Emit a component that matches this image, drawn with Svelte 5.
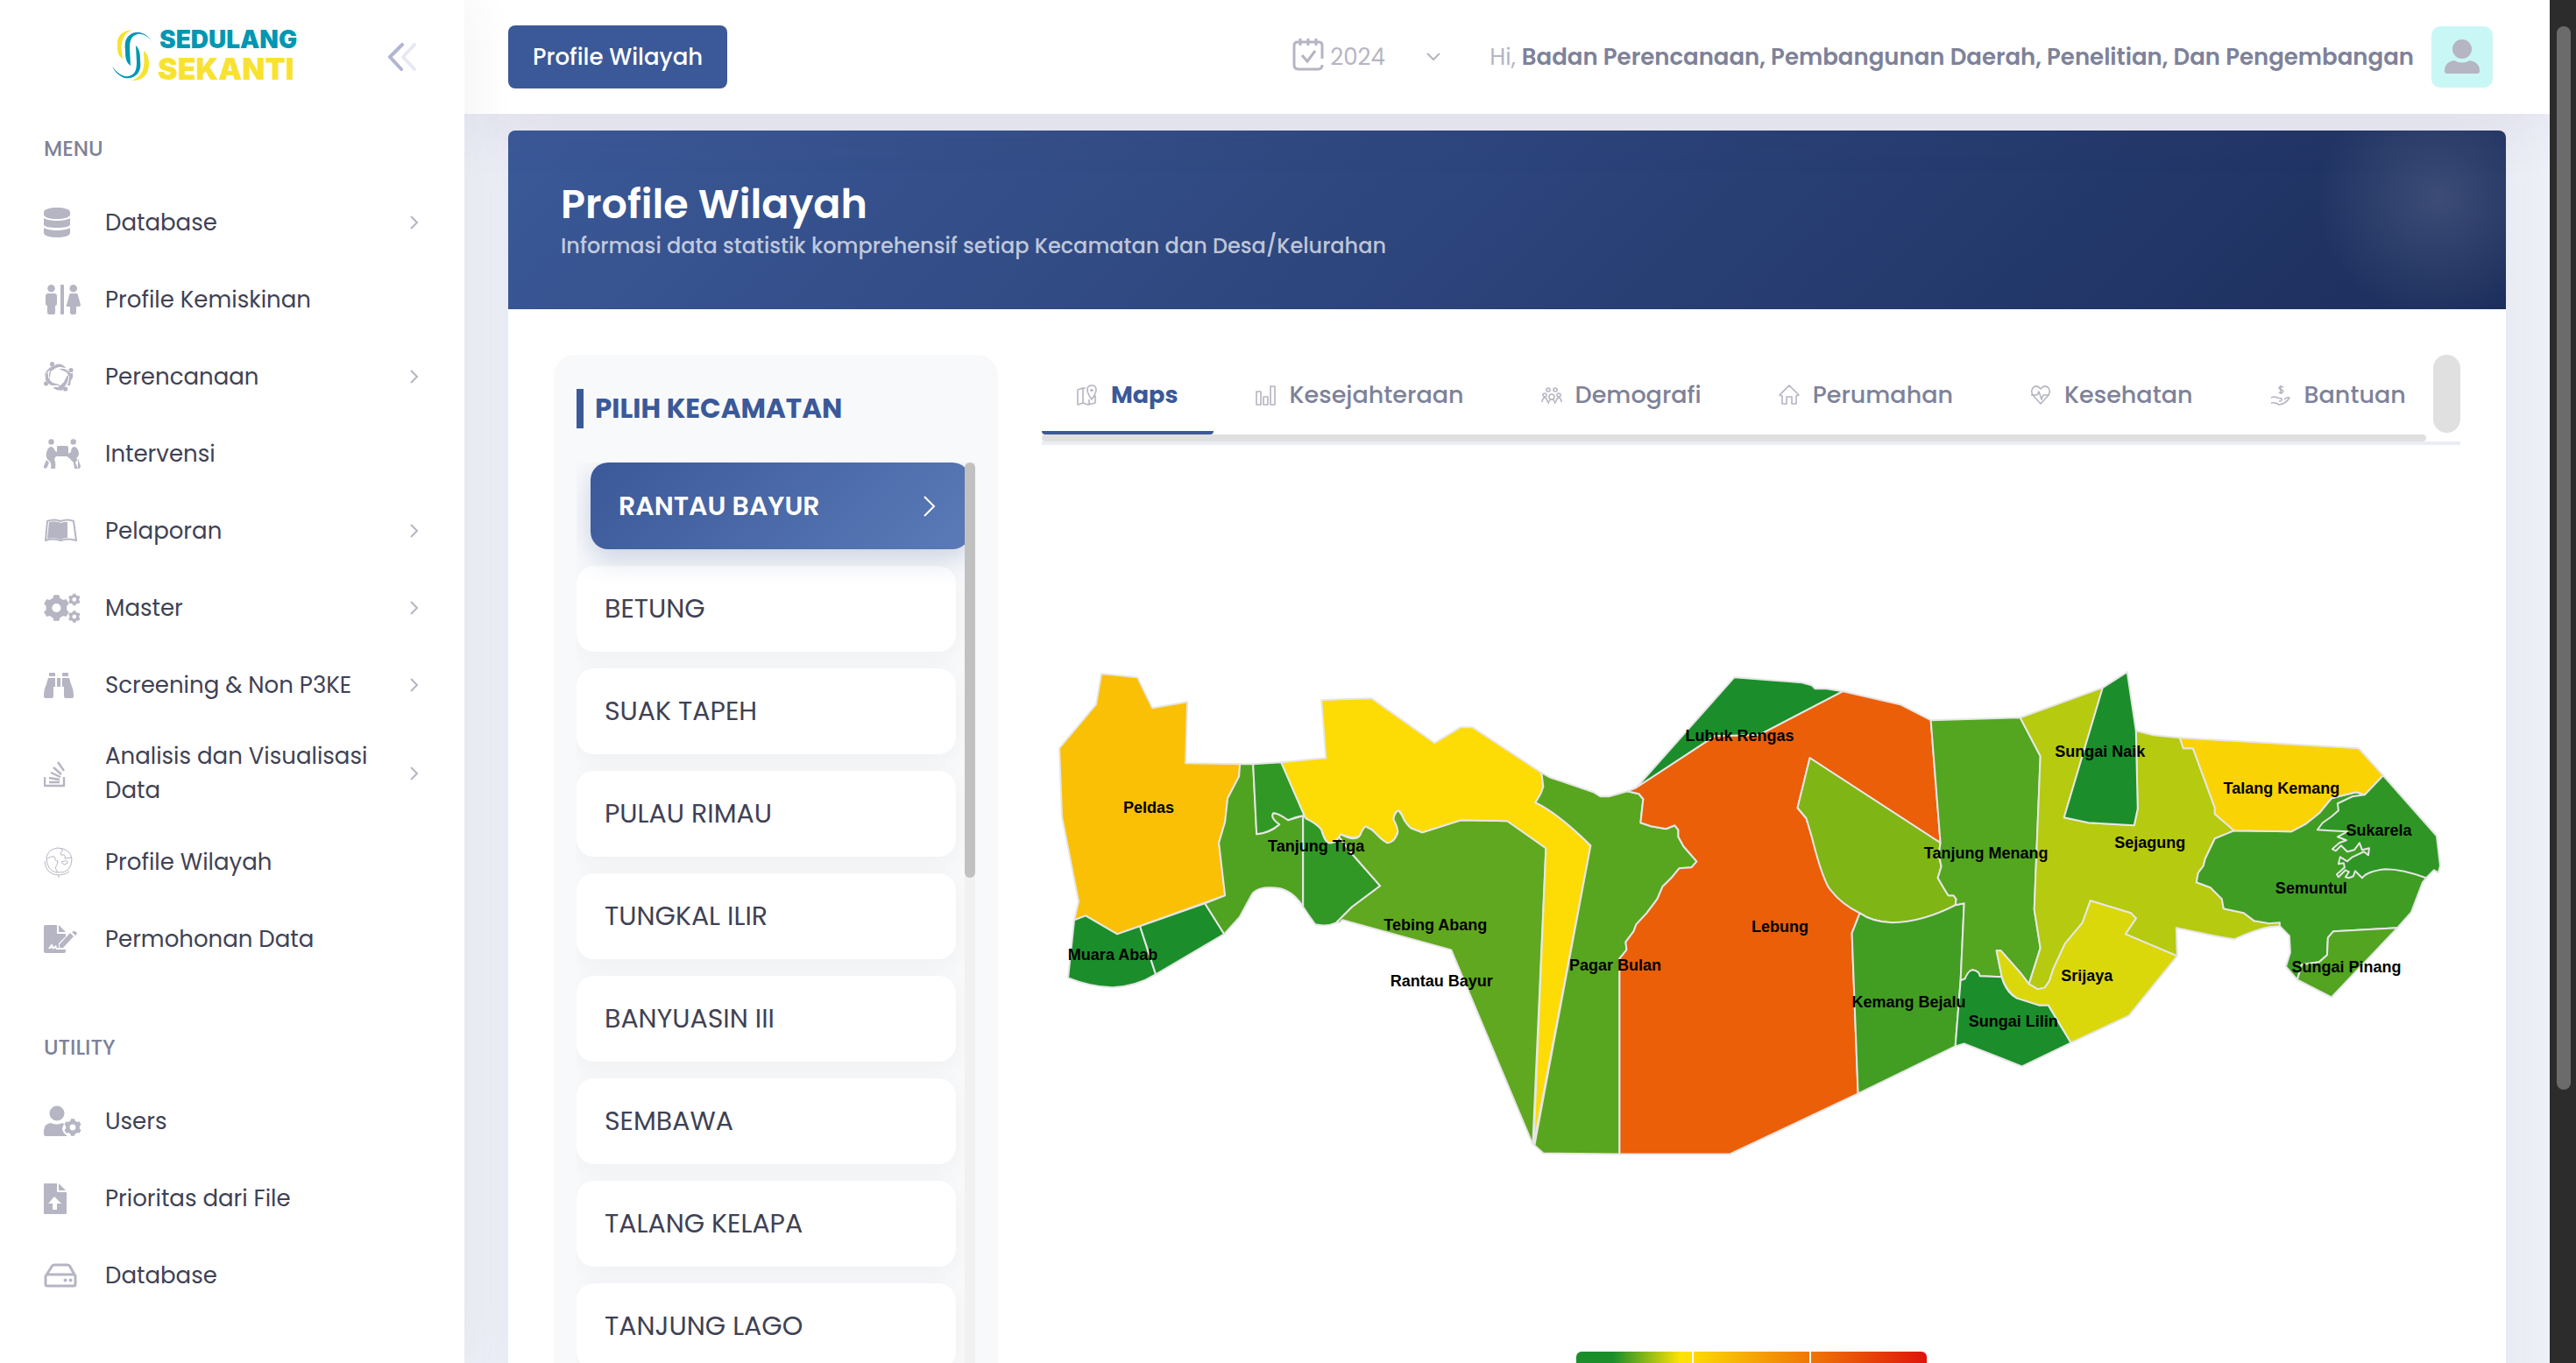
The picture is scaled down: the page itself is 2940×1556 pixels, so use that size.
<script lang="ts">
  type Icon = { fill?: string; line?: string; weight?: number };
  type MenuItem = { label: string; icon: string; children?: boolean };

  const dot = (x: number, y: number, r: number) =>
    `M${x - r} ${y}a${r} ${r} 0 1 0 ${r * 2} 0a${r} ${r} 0 1 0 ${-r * 2} 0z`;

  const gear = (x: number, y: number, r: number, teeth = 6) => {
    const step = (Math.PI * 2) / teeth;
    const points: string[] = [];
    for (let i = 0; i < teeth; i++) {
      const a = i * step - Math.PI / 2;
      [
        [-0.32, 0.8],
        [-0.2, 1],
        [0.2, 1],
        [0.32, 0.8],
      ].forEach(([offset, scale]) => {
        const angle = a + offset * step;
        points.push(
          `${(x + Math.cos(angle) * r * scale).toFixed(2)} ${(y + Math.sin(angle) * r * scale).toFixed(2)}`
        );
      });
    }
    return `M${points.join('L')}Z${dot(x, y, r * 0.34)}`;
  };

  const icons: Record<string, Icon> = {
    database: {
      fill: 'M30 6v3c0 3-7 5-15 5S0 12 0 9V6c0-3 7-5 15-5s15 2 15 5zM30 13v7c0 3-7 4-15 4S0 23 0 20v-7c3 2 9 3 15 3s12-1 15-3zM30 24v6c0 3-7 5-15 5S0 33 0 30v-6c3 2 9 3 15 3s12-1 15-3z',
    },
    restroom: {
      fill: `${dot(8.5, 5.3, 4.3)}${dot(33.7, 5.3, 4.3)}M5 11h7q3 0 3 3v9q0 2-2 2v8q0 2-2 2H6q-2 0-2-2v-8q-2 0-2-2v-9q0-3 3-3zM20 1h2q1 0 1 1v32q0 1-1 1h-2q-1 0-1-1V2q0-1 1-1zM31 11h6q2 0 2 2l3 11q0 2-2 2h-3v7q0 2-2 2h-3q-2 0-2-2v-7h-3q-2 0-1-2l3-11q0-2 2-2z`,
    },
    circle: {
      fill: `${dot(9.6, 3.7, 2.6)}${dot(31, 10.5, 2.6)}${dot(24.7, 32, 2.6)}${dot(2.6, 25.8, 2.6)}M10 6q3 0 4-2 7-2 11 4h-2q-4-2-9 0L8 12l-1 7-2 1 0-6q-3 1-4 5 0-9 9-13zM29 13q2 2 4 1 1 5-2 8l-1 6-3 0q2-6 2-10l-3-5-9-4 6 0q4 1 6 4zM24 29q-2 1-2 4-6 2-11-2v-1h7l-2-2-6-1 9 1 4-4 4-8 1 2q0 6-4 11zM4 24q0-1-2-2-1-6 4-11l1 0q-2 5 0 11l3 3 8 2-1 1-7 0q-3 0-6-4z`,
    },
    carry: {
      fill: `${dot(8.5, 4.4, 3.2)}${dot(33.7, 4.4, 3.2)}M16 9h10q2 0 2 2v7l3-2q0-6 4-6 4 1 5 7 0 4-3 6l2 3 0 9h-4l-1-7-5-5q-1 0-1-1l-2-1H14l-1 1-1 3q2 2 1 10H8q1-6-1-8l-3-3q-2-3-1-7 1-6 5-7 3 0 5 5l2 1v-5q0-2 1-2zM3 25l3 3-2 5q-1 3-4 1 0-1 0-2zM39 24l3 8q0 3-3 3l-3-7z`,
    },
    book: {
      fill: 'M6 8q7-2 14 1 4-2 7-1v18q-5 0-8 2-6-3-15-1z',
      line: 'M4 7q8-3 15 0 8-3 15 0l3 22q-9-3-18 0-10-3-17 0z',
      weight: 2,
    },
    cogs: {
      fill: `${gear(14.4, 18, 15)}${gear(34.8, 8.5, 7)}${gear(34.8, 28, 7)}`,
    },
    binoculars: {
      fill: 'M7 4h5q1 0 1 1v3H6V5q0-1 1-1zM22 4h5q1 0 1 1v3h-7V5q0-1 1-1zM5 10h8v10h-2v11q0 2-2 2H2q-2 0-2-2 0-8 3-14zM15 10h4v10h-4zM21 10h8l2 7q3 6 3 14 0 2-2 2h-7q-2 0-2-2V20h-2z',
    },
    stack: {
      line: 'M1 22v10h22V22M6 28h12M6 23l12 2M8 17l11 5M11 11l9 8M16 5l7 10',
      weight: 2.4,
    },
    globe: {
      line: 'M3 12q3-9 13-10 15 1 16 13-1 16-15 15Q7 30 4 20L3 12M1 17q1 16 17 16 8-1 11-4M17 33v3M20 2q3 3-1 6 0 3 3 2t2 4l8-1M4 14q8-4 9-1-1 4 3 4-1 5-3 8 4 5 1 5M20 18q8-3 7 1-4 4-7-1z',
      weight: 1,
    },
    signature: {
      fill: 'M2 2h13v9q0 1 1 1h9v3l-8 8v5h-2l-1-3-3 2-2-4-4 6h3l1-2 1 3 3-2 1 2h11v2q0 2-2 2H2q-2 0-2-2V4q0-2 2-2zM17 2l8 8h-8zM18 24l12-13 4 4-12 13h-4zM32 10q3-2 5 0 2 2-1 4z',
    },
    userCog: {
      fill: `${dot(15, 9, 8.5)}M8 20q7 3 13 0l2 1-2 5q0 5 6 9H2q-2 0-2-2v-4q0-8 8-9z${gear(33, 25, 10)}`,
    },
    upload: {
      fill: 'M1 1h14v9q0 1 1 1h10v24q0 1-1 1H1q-1 0-1-1V2q0-1 1-1zM17 1l8 8h-8zM12 16l-7 8h5v7h5v-7h5z',
    },
    drive: {
      fill: `${dot(24.5, 23.5, 2)}${dot(30.5, 23.5, 2)}`,
      line: 'M3 17h31q2 0 2 2v9q0 2-2 2H4q-2 0-2-2v-9l7-11q1-2 3-2h15q2 0 3 2l6 11',
      weight: 3,
    },
    map: {
      line: 'M10 4H7L1 6v17l6-2 6 2 8-2v-8l-2 1M7 4v17M14 23v-6M17 1q5 0 5 5 0 4-5 11-5-7-5-11 0-5 5-5zM16 6h2v1h-2z',
      weight: 1.6,
    },
    bars: { line: 'M1 8h5v15H1zM9 14h5v9H9zM17 2h5v21h-5z', weight: 1.6 },
    people: {
      line: `${dot(8, 6, 2)}${dot(16, 6, 2)}${dot(4, 12, 2)}${dot(20, 12, 2)}${dot(12, 14, 3)}M1 20q0-4 3-5 3 1 3 5M17 20q0-4 3-5 3 1 3 5M8 22q1-5 4-5t4 5`,
      weight: 1.6,
    },
    home: { line: 'M1 12L12 1l11 11-3 1v9h-5v-8H9v8H4v-9z', weight: 1.6 },
    heart: {
      line: 'M12 5Q8 0 4 3t-1 9l9 10 9-10q3-6-1-9t-8 2zM1 12h7l2-4 3 9 2-5h7',
      weight: 1.6,
    },
    hand: {
      line: 'M15 3q-4-2-5 1 1 2 3 2 3 1 1 3-2 1-4 0M12 1v10M1 15q4-2 7 0l5 1q1 3-3 3M1 21q5-1 9 2 8-1 12-8-3-1-6 2',
      weight: 1.6,
    },
  };

  const menu: MenuItem[] = [
    { label: 'Database', icon: 'database', children: true },
    { label: 'Profile Kemiskinan', icon: 'restroom' },
    { label: 'Perencanaan', icon: 'circle', children: true },
    { label: 'Intervensi', icon: 'carry' },
    { label: 'Pelaporan', icon: 'book', children: true },
    { label: 'Master', icon: 'cogs', children: true },
    { label: 'Screening & Non P3KE', icon: 'binoculars', children: true },
    { label: 'Analisis dan Visualisasi Data', icon: 'stack', children: true },
    { label: 'Profile Wilayah', icon: 'globe' },
    { label: 'Permohonan Data', icon: 'signature' },
  ];

  const utility: MenuItem[] = [
    { label: 'Users', icon: 'userCog' },
    { label: 'Prioritas dari File', icon: 'upload' },
    { label: 'Database', icon: 'drive' },
  ];

  const sections = [
    { title: 'MENU', items: menu },
    { title: 'UTILITY', items: utility },
  ];

  const districts = [
    'RANTAU BAYUR',
    'BETUNG',
    'SUAK TAPEH',
    'PULAU RIMAU',
    'TUNGKAL ILIR',
    'BANYUASIN III',
    'SEMBAWA',
    'TALANG KELAPA',
    'TANJUNG LAGO',
  ];

  const tabs = [
    { label: 'Maps', icon: 'map' },
    { label: 'Kesejahteraan', icon: 'bars' },
    { label: 'Demografi', icon: 'people' },
    { label: 'Perumahan', icon: 'home' },
    { label: 'Kesehatan', icon: 'heart' },
    { label: 'Bantuan', icon: 'hand' },
  ];

  let district = $state('RANTAU BAYUR');
  let tab = $state('Maps');
  let year = $state('2024');

  // village polygons, painted in order
  const areas = [
    { color: '#fac005', d: 'M68 29L109 33 126 68 166 61 164 131 226 132 225 146 212 171 209 198 202 222 209 282 86 326 50 305 37 310 42 289 23 192 20 114 62 64z' },
    { color: '#1b8e2b', d: 'M37 310L50 305 86 326 112 317 130 372Q107 386 80 387 55 386 30 376z' },
    { color: '#1b8e2b', d: 'M112 317L186 291 208 326 130 372z' },
    { color: '#50a320', d: 'M226 132L241 132 245 212Q260 211 271 201 260 194 263 189 268 186 281 196L298 191V295Q288 278 272 274 245 270 239 282L226 306 208 326 186 291 209 282 202 222 209 198 212 171 225 146z' },
    { color: '#319826', d: 'M241 132L273 130 301 194 298 191Q287 193 281 196 268 187 264 188 260 193 271 201 258 211 245 212z' },
    { color: '#319826', d: 'M298 191L310 198Q316 202 319 207 323 222 328 222 336 222 339 215L356 237 386 271 354 295 336 313Q325 318 312 315 308 310 298 295z' },
    { color: '#60a81f', d: 'M339 215L341 212Q350 217 355 217 361 217 363 213 367 203 369 203 375 204 387 217 394 223 401 219 406 213 406 209 401 202 401 195 403 186 407 185 411 190 413 195 417 202 421 205L434 210 478 196 531 197 575 228 560 566 467 344 343 310 340 313 336 313 354 295 386 271 356 237z' },
    { color: '#fddb04', d: 'M273 130L324 125 319 59 376 57 448 108 478 90 491 90 570 142 572 158 569 166 563 176Q585 185 626 225L561 566 575 228 531 197 478 196 434 210 421 205Q415 199 413 195 410 186 407 185 402 186 401 195 406 204 406 209 402 222 394 222 388 219 377 207L369 203Q366 206 363 213 358 219 341 212L339 215Q334 222 328 222 324 222 319 207 314 200 301 194z' },
    { color: '#58a620', d: 'M570 142L579 147 629 164 637 169 647 169 668 163 681 166 686 172 684 188 683 199 695 203 712 206 722 202 726 207 726 215 732 226 747 243 741 250 727 251 718 262 708 272 702 286 690 302 678 315 675 323 666 335 667 344 659 354V577L572 576 562 567 626 225Q590 189 563 176L569 166 572 158z' },
    { color: '#1b8e2b', d: 'M790 33L867 39 878 42 882 46 895 46 914 49 818 99 768 100 678 159z' },
    { color: '#eb5f08', d: 'M668 163L678 159 768 100 818 99 914 49 979 64 1014 82 1025 222 876 125 862 182 872 194 878 214 887 245 897 272 912 287 933 302 924 325 931 508 785 577H659V354L667 344 666 335 675 323 678 315 690 302 702 286 708 272 718 262 727 251 741 250 747 243 732 226 726 215 726 207 722 202 712 206 695 203 683 199 686 172 681 166z' },
    { color: '#80b516', d: 'M876 125L1025 222 1023 235 1026 249 1022 262 1029 274 1034 282 1040 282 1043 286 1042 293Q1000 314 970 313 947 312 933 302 910 291 897 272 888 255 878 214L872 194 862 182z' },
    { color: '#429e22', d: 'M933 302Q947 312 970 313 1005 312 1042 293L1052 291 1048 379 1042 454 931 508 924 325z' },
    { color: '#54a520', d: 'M1014 82L1116 79 1139 123 1132 298 1139 342 1126 383 1116 370 1094 345H1089L1095 375 1070 374Q1069 368 1061 367 1058 368 1053 377L1048 379 1052 291 1042 293 1043 286 1040 282 1034 282 1029 274 1022 262 1026 249 1023 235 1025 222z' },
    { color: '#1b8e2b', d: 'M1048 379L1053 377Q1057 367 1062 367 1069 368 1070 374L1095 375Q1100 393 1112 399L1137 407H1148L1174 450 1118 477 1052 451 1042 454z' },
    { color: '#b6ca0f', d: 'M1116 79L1210 45 1166 193 1194 199 1246 202 1250 183 1248 94 1268 99 1298 102 1302 114H1313L1338 182V189L1360 208 1338 217 1327 240 1325 248 1319 256 1317 267 1333 273 1346 286 1348 297 1371 302 1383 311 1412 313V317L1400 318Q1384 321 1360 332L1337 328 1294 319 1295 351 1236 326 1248 308 1242 302 1196 288 1187 313 1167 337 1154 365 1149 380 1144 387 1136 389 1126 383 1139 342 1132 298 1139 123z' },
    { color: '#1b8e2b', d: 'M1210 45L1238 27 1248 94 1250 183 1246 202 1194 199 1166 193z' },
    { color: '#dad80a', d: 'M1196 288L1242 302 1248 308 1236 326 1295 351 1240 419 1174 450 1148 407H1137L1112 399Q1100 391 1095 375L1089 345H1094L1116 370 1126 383 1136 389 1144 387 1149 380 1154 365 1167 337 1187 313z' },
    { color: '#3f9d24', d: 'M1360 208L1425 209 1442 200 1457 188 1471 171 1499 164 1509 167 1579 262 1575 267 1562 301 1546 319 1473 323 1467 330 1466 350 1457 358 1437 361 1432 378 1419 363 1424 347 1423 328 1412 317V313L1400 314 1383 311 1371 302 1348 297 1346 286 1333 273 1317 267 1319 256 1325 248 1327 240 1338 217z' },
    { color: '#fad304', d: 'M1298 102L1502 114 1530 145 1509 167 1499 164 1471 171 1457 188 1442 200 1425 209 1360 208 1338 189V182L1313 114H1302z' },
    { color: '#2f9626', d: 'M1530 145L1591 214 1595 248 1593 256 1588 253 1579 262Q1552 252 1533 252 1512 254 1506 262L1498 254 1496 260 1491 262 1487 261 1491 255 1487 253 1479 261 1477 258 1486 250 1485 245 1479 246 1481 238 1489 243 1495 238 1508 232 1513 236 1514 228 1506 230 1503 222 1497 230 1489 232 1482 225 1476 231 1472 229 1480 222 1488 219 1478 215 1489 209 1470 208 1455 207 1461 199 1471 192 1479 185 1478 177 1495 169 1509 167z' },
    { color: '#52a421', d: 'M1546 319L1471 398 1432 378 1437 361 1457 358 1466 350 1467 330 1473 323z' },
  ];

  const places = [
    { name: 'Peldas', x: 122, y: 188 },
    { name: 'Muara Abab', x: 81, y: 356 },
    { name: 'Tanjung Tiga', x: 313, y: 232 },
    { name: 'Tebing Abang', x: 449, y: 322 },
    { name: 'Rantau Bayur', x: 456, y: 386 },
    { name: 'Pagar Bulan', x: 654, y: 368 },
    { name: 'Lubuk Rengas', x: 796, y: 106 },
    { name: 'Lebung', x: 842, y: 324 },
    { name: 'Tanjung Menang', x: 1077, y: 240 },
    { name: 'Kemang Bejalu', x: 989, y: 410 },
    { name: 'Sungai Lilin', x: 1108, y: 432 },
    { name: 'Sungai Naik', x: 1207, y: 124 },
    { name: 'Sejagung', x: 1264, y: 228 },
    { name: 'Talang Kemang', x: 1414, y: 166 },
    { name: 'Sukarela', x: 1525, y: 214 },
    { name: 'Semuntul', x: 1448, y: 280 },
    { name: 'Srijaya', x: 1192, y: 380 },
    { name: 'Sungai Pinang', x: 1488, y: 370 },
  ];
</script>

{#snippet glyph(name: string)}
  <path class="glyph-fill" fill-rule="evenodd" d={icons[name].fill ?? ''} />
  <path class="glyph-line" stroke-width={icons[name].weight ?? 1} d={icons[name].line ?? ''} />
{/snippet}

{#snippet menuContent(item: MenuItem)}
  <svg class="menu-icon" viewBox="0 0 44 36" aria-hidden="true">{@render glyph(item.icon)}</svg>
  <span class="menu-label">{item.label}</span>
  {#if item.children}
    <svg class="menu-arrow" viewBox="0 0 10 16" aria-hidden="true"><path d="M1 1l7 7-7 7" /></svg>
  {/if}
{/snippet}

<div class="app">
  <aside class="sidebar">
    <div class="brand">
      <a href="#home" class="logo" aria-label="Sedulang Sekanti">
        <svg viewBox="0 0 216 64">
          <path fill="#f9e22f" d="M24 1C10 2 5 9 6 20c0 7 1 11 6 14-1-7-2-12-1-17C12 9 16 3 24 1zM36 25c5 4 6 9 6 16-1 12-7 18-20 18 8-3 13-8 14-17 1-6 0-11 0-17z" />
          <path fill="#0097b2" d="M47 17C41 6 32 1 23 5c-8 4-9 11-8 19 0 10 1 14 6 18l-1-20c0-9 2-14 9-16 7-1 13 3 18 11zM0 43c6 11 15 16 24 12 8-4 9-11 8-19 0-9-1-13-5-17l1 19c0 9-2 14-9 16-8 1-13-4-19-11z" />
          <text x="54" y="22" fill="#0097b2" font-size="28">SEDULANG</text>
          <text x="52" y="58" fill="#f9e22f" font-size="34">SEKANTI</text>
        </svg>
      </a>
      <button class="toggle" aria-label="Toggle menu">
        <svg viewBox="0 0 34 32">
          <path stroke="#b1b5d1" d="M17 2L3 16l13 14" />
          <path stroke="#e8e8f2" d="M31 2L18 16l13 14" />
        </svg>
      </button>
    </div>
    <nav>
      {#each sections as section}
        <h4>{section.title}</h4>
        <ul>
          {#each section.items as item}
            <li>
              {#if item.children}
                <button class="menu-link">{@render menuContent(item)}</button>
              {:else}
                <a class="menu-link" href="#{item.icon}">{@render menuContent(item)}</a>
              {/if}
            </li>
          {/each}
        </ul>
      {/each}
    </nav>
  </aside>

  <div class="wrapper">
    <header>
      <button class="btn-primary">Profile Wilayah</button>
      <div class="topbar">
        <label class="year">
          <svg class="calendar" viewBox="0 0 36 38" aria-hidden="true">
            <path d="M34 24V9q0-4-4-4H6Q2 5 2 9v22q0 5 5 5h22q5 0 5-5M9 1v8M18 1v8M27 1v8M11 20l6 7 9-12" />
          </svg>
          <select bind:value={year} aria-label="Tahun">
            <option>2024</option>
          </select>
          <svg class="caret" viewBox="0 0 16 10" aria-hidden="true"><path d="M1 1l7 7 7-7" /></svg>
        </label>
        <a class="user" href="#user">
          <span class="greeting">Hi, <b>Badan Perencanaan, Pembangunan Daerah, Penelitian, Dan Pengembangan</b></span>
          <span class="avatar">
            <svg viewBox="0 0 40 40" aria-hidden="true">
              <circle cx="20" cy="11" r="11" />
              <path d="M11 24q9 5 18 0 11 2 11 12 0 3-3 3H3q-3 0-3-3 0-10 11-12z" />
            </svg>
          </span>
        </a>
      </div>
    </header>

    <main>
      <section class="card">
        <div class="hero">
          <h1>Profile Wilayah</h1>
          <p>Informasi data statistik komprehensif setiap Kecamatan dan Desa/Kelurahan</p>
        </div>
        <div class="card-body">
          <div class="panel">
            <h2>PILIH KECAMATAN</h2>
            <div class="district-scroll">
              <ul class="districts">
                {#each districts as name}
                  <li>
                    <button class:active={name === district} onclick={() => (district = name)}>
                      {name}
                      {#if name === district}
                        <svg viewBox="0 0 14 24" aria-hidden="true"><path d="M1 1l11 11L1 23" /></svg>
                      {/if}
                    </button>
                  </li>
                {/each}
              </ul>
              <div class="list-track"><div class="list-thumb"></div></div>
            </div>
          </div>

          <div class="content">
            <div class="tab-bar">
              <div class="tab-row">
                <div class="tabs" role="tablist">
                  {#each tabs as item}
                    <button
                      role="tab"
                      aria-selected={item.label === tab}
                      class:active={item.label === tab}
                      onclick={() => (tab = item.label)}
                    >
                      <svg viewBox="0 0 24 24" aria-hidden="true">{@render glyph(item.icon)}</svg>
                      {item.label}
                    </button>
                  {/each}
                </div>
                <div class="tab-pill"></div>
              </div>
              <div class="tab-thumb"></div>
            </div>
            <svg class="map" viewBox="0 -232 1618 1034" role="img" aria-label="Peta {district}">
              {#each areas as area}
                <path fill={area.color} d={area.d} />
              {/each}
              {#each places as place}
                <text x={place.x} y={place.y}>{place.name}</text>
              {/each}
            </svg>
            <div class="legend">
              <span></span>
              <span></span>
              <span></span>
            </div>
          </div>
        </div>
      </section>
    </main>
  </div>

  <div class="page-track"><div class="page-thumb"></div></div>
</div>

<style>
  :global(body) {
    font-family: Poppins, Inter, 'Open Sans', sans-serif;
    font-size: 26px;
    color: #3f4254;
    background: #eef0f8;
  }

  .app {
    display: grid;
    grid-template-columns: 530px 1fr 30px;
    height: 100vh;
    overflow: hidden;
  }

  .app :is(h1, h2, h4, p, ul) {
    margin: 0;
    padding: 0;
    list-style: none;
  }

  button,
  select {
    font: inherit;
    color: inherit;
    background: none;
    border: 0;
    padding: 0;
    cursor: pointer;
  }

  a {
    color: inherit;
    text-decoration: none;
  }

  svg {
    fill: none;
    flex: none;
  }

  .glyph-fill {
    fill: #b5b5c3;
  }

  .glyph-line {
    stroke: #b5b5c3;
    stroke-linejoin: round;
  }

  /* sidebar */
  .sidebar {
    position: relative;
    z-index: 2;
    background: #fff;
    box-shadow: 0 0 56px rgba(82, 63, 105, 0.08);
  }

  .brand {
    display: flex;
    align-items: center;
    justify-content: space-between;
    height: 130px;
    padding: 0 54px 0 128px;
    box-sizing: border-box;
  }

  .logo svg {
    display: block;
    width: 216px;
    height: 64px;
    overflow: visible;
  }

  .logo text {
    font-family: Inter, sans-serif;
    font-weight: 900;
  }

  .toggle svg {
    display: block;
    width: 34px;
    height: 32px;
    stroke-width: 4;
    stroke-linecap: round;
    stroke-linejoin: round;
  }

  .sidebar h4 {
    padding-left: 50px;
    font-size: 24px;
    line-height: 80px;
    font-weight: 500;
    color: #7e8299;
  }

  .sidebar ul + h4 {
    margin-top: 40px;
  }

  .menu-link {
    display: flex;
    align-items: center;
    width: 100%;
    min-height: 88px;
    padding: 18px 50px;
    box-sizing: border-box;
    line-height: 39px;
    text-align: left;
  }

  .menu-icon {
    width: 44px;
    height: 36px;
    margin-right: 26px;
  }

  .menu-label {
    flex: 1;
    padding-right: 30px;
  }

  .menu-arrow {
    width: 10px;
    height: 16px;
    stroke: #b5b5c3;
    stroke-width: 2;
    margin-right: 2px;
  }

  /* header */
  .wrapper {
    display: flex;
    flex-direction: column;
    min-width: 0;
    overflow: hidden;
  }

  header {
    position: relative;
    z-index: 1;
    display: flex;
    flex: none;
    align-items: center;
    justify-content: space-between;
    height: 130px;
    padding: 0 65px 0 50px;
    box-sizing: border-box;
    background: #fff;
    box-shadow: 0 20px 60px rgba(82, 63, 105, 0.08);
  }

  .btn-primary {
    height: 72px;
    padding: 0 28px;
    border-radius: 8px;
    background: #3b5998;
    color: #fff;
    font-weight: 500;
  }

  .topbar,
  .year,
  .user {
    display: flex;
    align-items: center;
  }

  .year {
    margin-right: 56px;
    color: #b5b5c3;
  }

  .calendar {
    width: 36px;
    height: 38px;
    margin-right: 7px;
    margin-bottom: 6px;
    stroke: #b5b5c3;
    stroke-width: 3;
  }

  .year select {
    appearance: none;
    width: 110px;
  }

  .caret {
    width: 16px;
    height: 10px;
    stroke: #b5b5c3;
    stroke-width: 2;
  }

  .greeting {
    color: #b5b5c3;
  }

  .greeting b {
    font-weight: 600;
    color: #7e8299;
  }

  .avatar {
    display: grid;
    place-items: center;
    width: 70px;
    height: 70px;
    margin-left: 20px;
    border-radius: 10px;
    background: #c9f7f5;
  }

  .avatar svg {
    width: 40px;
    height: 40px;
    fill: #b5b5c3;
  }

  /* card */
  main {
    flex: 1;
    padding: 19px 50px 0;
  }

  .card {
    height: 100%;
    border-radius: 8px;
    background: #fff;
    box-shadow: 0 0 60px rgba(82, 63, 105, 0.05);
  }

  .hero {
    height: 204px;
    padding: 54px 60px 0;
    box-sizing: border-box;
    border-radius: 8px 8px 0 0;
    background:
      radial-gradient(circle 140px at calc(100% - 76px) 38%, rgba(255, 255, 255, 0.13), transparent),
      linear-gradient(135deg, #3b5998, #1c2e5c);
    color: #fff;
  }

  .hero h1 {
    font-size: 46px;
    line-height: 60px;
    font-weight: 600;
  }

  .hero p {
    line-height: 36px;
    font-size: 24px;
    font-weight: 500;
    color: rgba(255, 255, 255, 0.7);
  }

  .card-body {
    display: grid;
    grid-template-columns: 507px 1fr;
    gap: 50px;
    padding: 52px;
  }

  .panel {
    padding: 39px 26px;
    border-radius: 24px;
    background: #f8f9fb;
  }

  .panel h2 {
    padding-left: 13px;
    margin-bottom: 39px;
    border-left: 8px solid #3b5998;
    font-size: 31px;
    line-height: 45px;
    font-weight: 700;
    color: #3b5998;
  }

  .district-scroll {
    display: flex;
    overflow: hidden;
  }

  .districts {
    display: flex;
    flex: 1;
    flex-direction: column;
    gap: 19px;
    padding-right: 10px !important;
    margin-right: -10px !important;
    overflow: hidden;
  }

  .districts li {
    padding-right: 10px;
  }

  .districts button {
    display: flex;
    align-items: center;
    justify-content: space-between;
    width: 100%;
    height: 98px;
    padding: 0 39px 0 32px;
    border-radius: 20px;
    background: #fff;
    box-shadow: 0 8px 30px rgba(0, 0, 0, 0.04);
    font-size: 30px;
  }

  .districts button.active {
    transform: translateX(16px);
    height: 99px;
    background: linear-gradient(135deg, #3b5998, #5b7ab8);
    box-shadow: 0 10px 30px rgba(59, 89, 152, 0.25);
    color: #fff;
    font-weight: 600;
  }

  .districts svg {
    width: 14px;
    height: 24px;
    stroke: #fff;
    stroke-width: 2;
  }

  .list-track {
    position: relative;
    width: 12px;
    background: #f1f1f1;
  }

  .list-thumb {
    height: 474px;
    border-radius: 6px;
    background: #c1c1c1;
  }

  /* tabs */
  .content {
    min-width: 0;
  }

  .tab-bar {
    border-bottom: 4px solid #ebedf6;
  }

  .tab-row {
    display: flex;
    gap: 8px;
  }

  .tabs {
    display: flex;
    flex: 1;
    gap: 8px;
    min-width: 0;
    overflow: hidden;
  }

  .tabs button {
    display: flex;
    flex: none;
    align-items: center;
    gap: 15px;
    height: 91px;
    padding: 4px 40px 0;
    border-bottom: 4px solid transparent;
    border-radius: 4px;
    box-sizing: border-box;
    color: #7e8299;
    font-size: 27px;
    font-weight: 500;
    white-space: nowrap;
  }

  .tabs button.active {
    border-bottom-color: #3b5998;
    color: #3b5998;
    font-weight: 700;
  }

  .tabs svg {
    width: 24px;
    height: 24px;
  }

  .tab-pill {
    flex: none;
    width: 31px;
    height: 89px;
    border-radius: 16px;
    background: #e0e0e0;
  }

  .tab-thumb {
    height: 8px;
    margin-right: 39px;
    border-radius: 4px;
    background: #e0e0e0;
  }

  .map {
    display: block;
    width: 100%;
  }

  .map path {
    stroke: #e6e6e6;
    stroke-width: 2;
    stroke-linejoin: round;
  }

  .map text {
    fill: #000;
    font-family: 'Liberation Sans', Arial, sans-serif;
    font-size: 18px;
    font-weight: 700;
    text-anchor: middle;
  }

  .legend {
    display: grid;
    grid-template-columns: repeat(3, 1fr);
    gap: 2px;
    width: 400px;
    height: 20px;
    margin: 0 auto;
    border-radius: 6px;
    overflow: hidden;
  }

  .legend span:nth-child(1) {
    background: linear-gradient(90deg, #1b8e2b 32%, #fde304 90%, #fddf04);
  }

  .legend span:nth-child(2) {
    background: linear-gradient(90deg, #fcd905, #ef7606);
  }

  .legend span:nth-child(3) {
    background: linear-gradient(90deg, #ef7606, #df130b);
  }

  .page-track {
    padding: 30px 6px 0 8px;
    background: #2c2c2c;
  }

  .page-thumb {
    height: 1214px;
    border-radius: 8px;
    background: #6b6b6b;
  }
</style>
